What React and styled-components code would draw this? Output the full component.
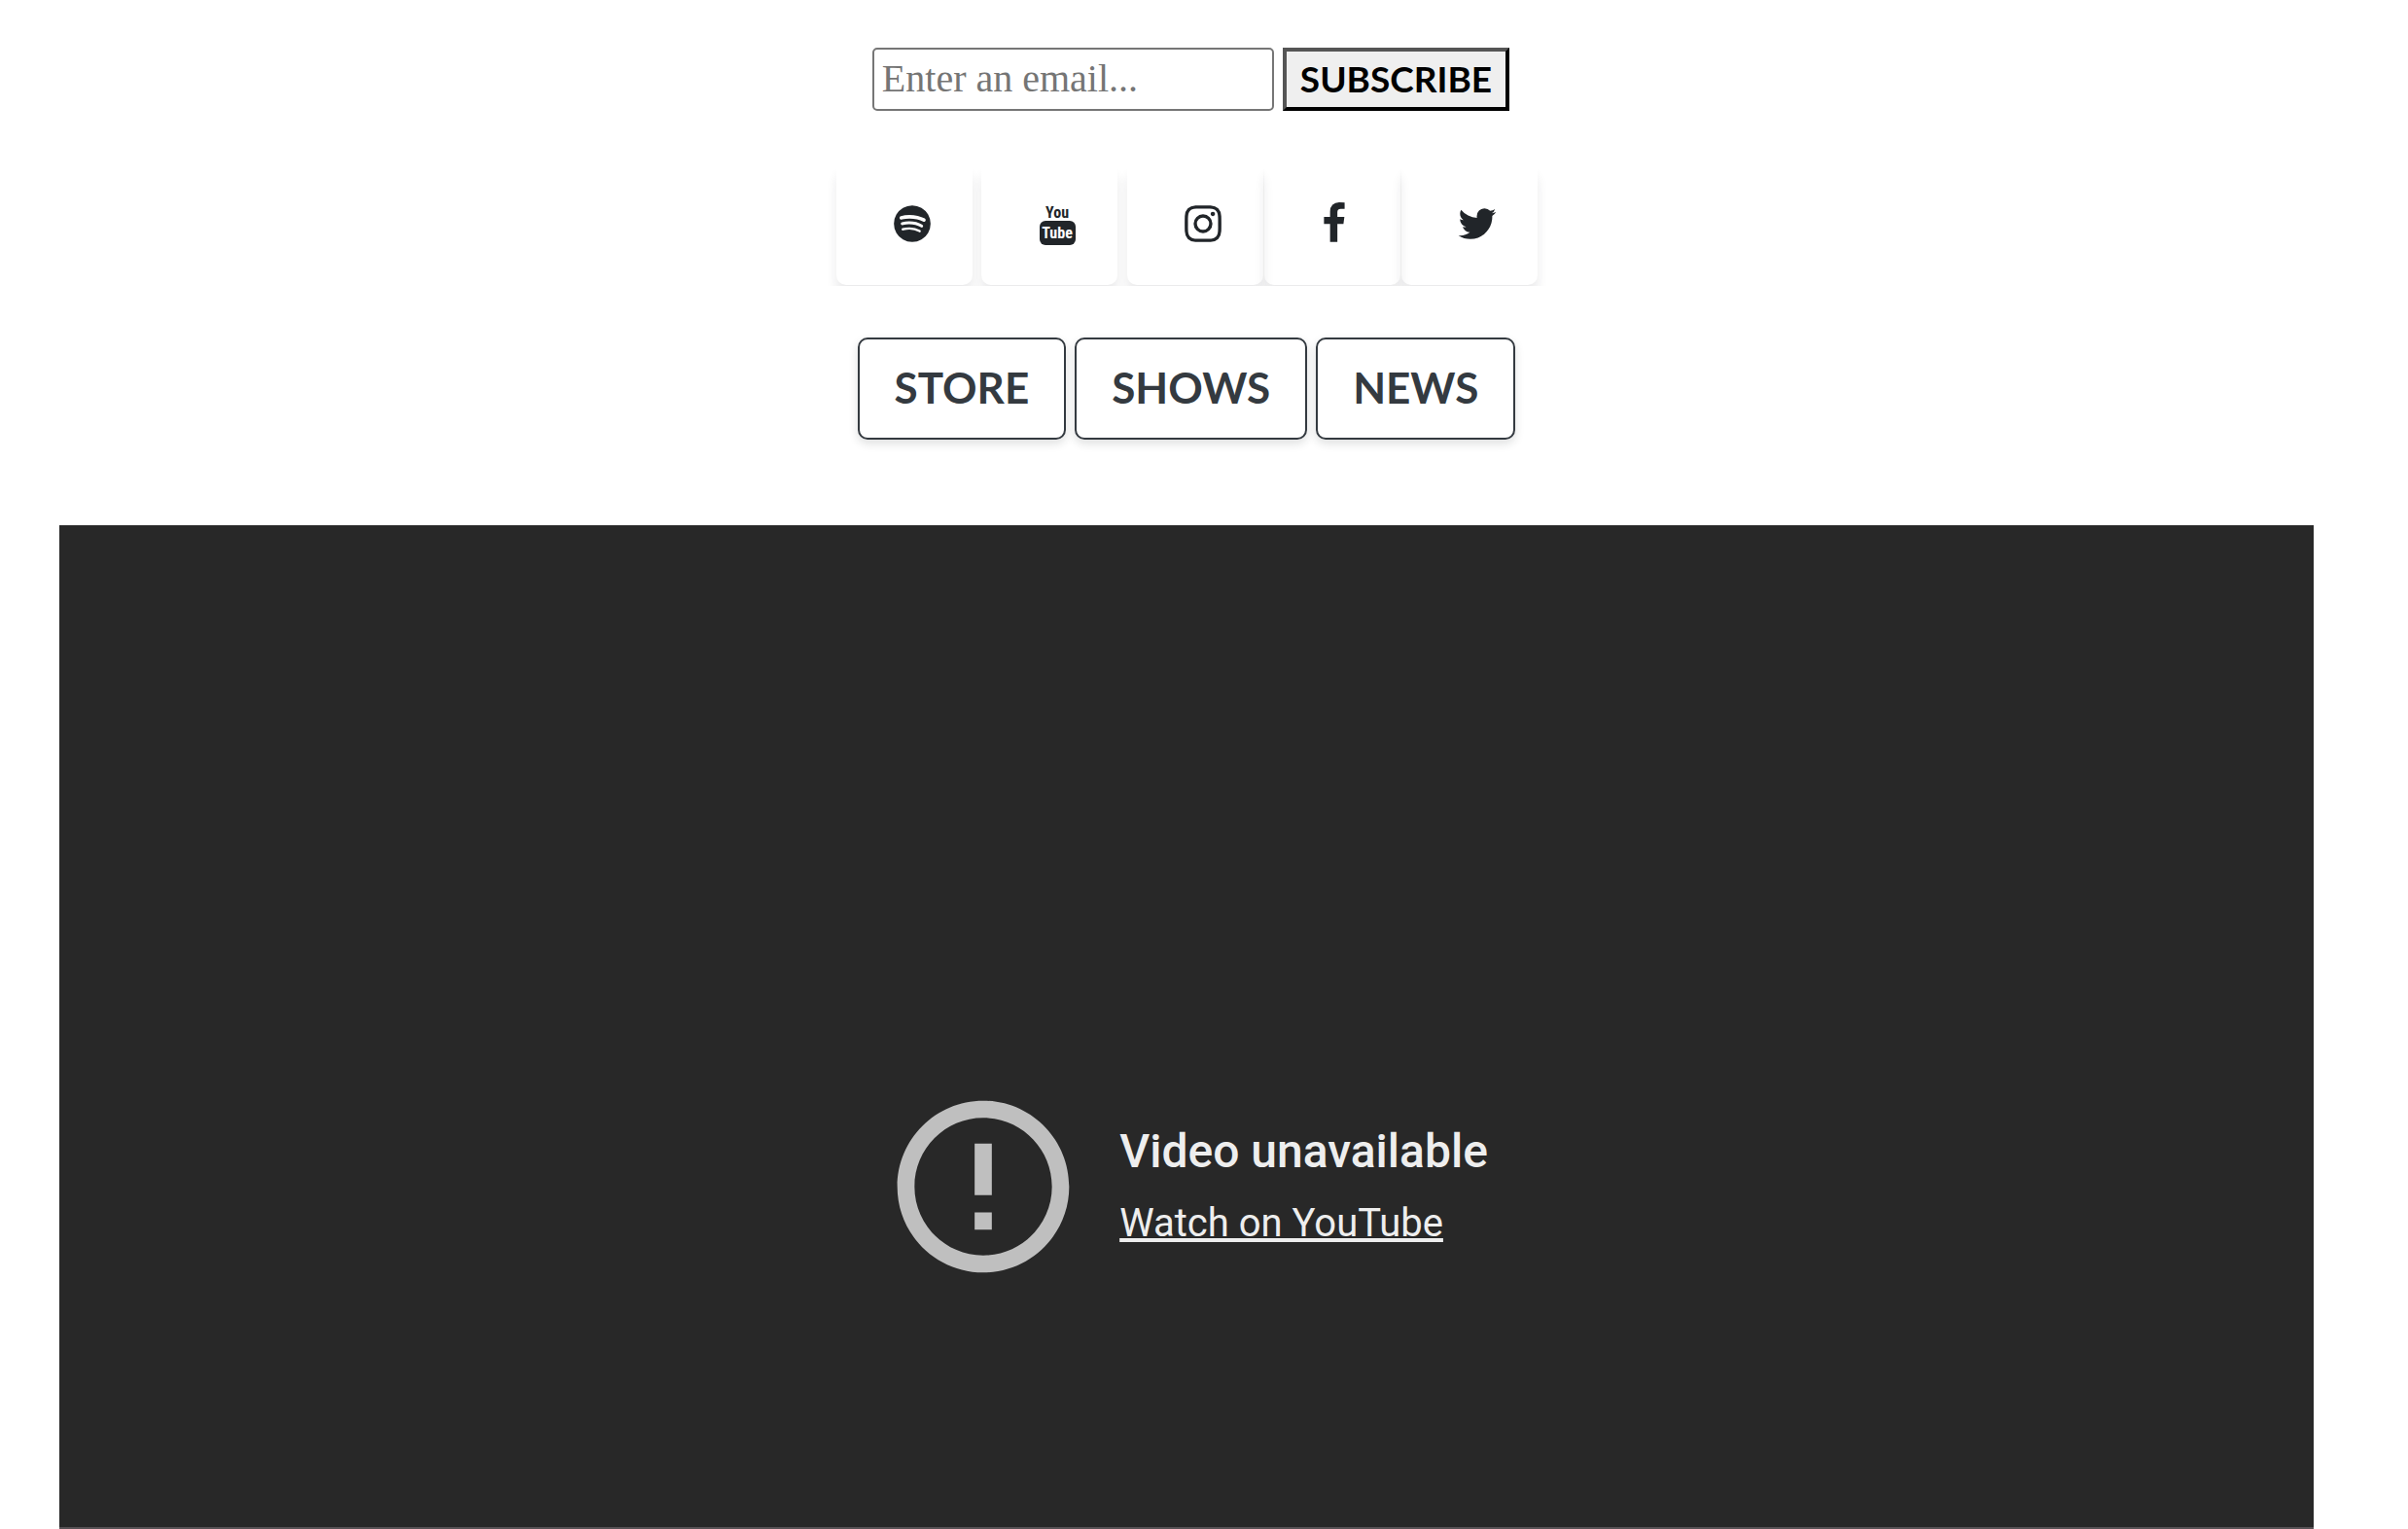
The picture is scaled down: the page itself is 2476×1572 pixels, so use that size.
import React from "react";
import styled, { createGlobalStyle } from "styled-components";

const GlobalStyle = createGlobalStyle`
  *, *::before, *::after { box-sizing: border-box; }
  body {
    margin: 0;
    background: #fff;
    color: #212529;
    font-family: Lato, "Open Sans", sans-serif;
  }
`;

const Page = styled.main`
  display: flex;
  flex-direction: column;
  align-items: center;
  min-height: 100vh;
  padding: 49px 36px 0 0;
`;

const SubscribeForm = styled.form`
  display: flex;
  gap: 9px;
  height: 65px;
  padding-left: 9px;
`;

const EmailInput = styled.input`
  width: 413px;
  margin: 0;
  padding: 0 8px 2px;
  border: 2px solid #767676;
  border-radius: 5px;
  background: #fff;
  color: #212529;
  font: 400 40px "Liberation Serif", serif;
  &::placeholder { color: #757575; opacity: 1; }
`;

const SubscribeButton = styled.button`
  margin: 0;
  padding: 0 14px 2px;
  border: 4px solid;
  border-color: #555 #000 #000 #555;
  border-radius: 0;
  background: #efefef;
  color: #000;
  font: 700 37px/52px Lato, sans-serif;
  text-transform: uppercase;
`;

const SocialRow = styled.nav`
  display: flex;
  margin-top: 53px;
  padding: 0 9px 1px;
  overflow: hidden;
`;

const SocialLink = styled.a`
  display: flex;
  align-items: center;
  justify-content: center;
  width: 140px;
  height: 126px;
  margin-right: ${(p) => p.$gap}px;
  padding-left: 16px;
  border-radius: 10px;
  box-shadow: 0 12px 12px rgba(33, 37, 41, 0.09);
  color: inherit;
  svg { display: block; fill: currentColor; }
`;

const WordmarkText = styled.text`
  font: 700 16px "Liberation Sans Narrow", "Roboto Condensed", Roboto, sans-serif;
  text-anchor: middle;
  fill: ${(p) => p.$color};
`;

const LinkRow = styled.nav`
  display: flex;
  gap: 9px;
  margin-top: 53px;
`;

const PageLink = styled.a`
  padding: 23px 36px 25px;
  border: 2px solid #343a40;
  border-radius: 10px;
  box-shadow: 0 4px 10px rgba(33, 37, 41, 0.15);
  color: #343a40;
  font-size: 44px;
  font-weight: 700;
  line-height: 53px;
  text-decoration: none;
  text-transform: uppercase;
`;

const Player = styled.section`
  display: flex;
  flex: 1;
  align-items: center;
  justify-content: center;
  gap: 34px;
  width: 95%;
  margin-top: 88px;
  padding: 330px 5px 0 0;
  border-bottom: 2px solid #575255;
  background: #282828;
  color: #eee;
  font-family: Roboto, sans-serif;
`;

const ErrorIcon = styled.svg`
  width: 212px;
  height: 212px;
  fill: #bfbfbf;
`;

const Message = styled.div`
  display: flex;
  flex-direction: column;
  align-items: flex-start;
  gap: 20px;
  padding-bottom: 4px;
`;

const MessageTitle = styled.h2`
  margin: 0;
  font-size: 48px;
  font-weight: 500;
  line-height: 60px;
`;

const WatchLink = styled.a`
  color: inherit;
  font-size: 40px;
  line-height: 48px;
  text-decoration: underline;
`;

function YouTubeMark() {
  return (
    <svg width="44" height="44" viewBox="0 0 44 44" aria-hidden="true">
      <WordmarkText x="22" y="16" $color="#212529">You</WordmarkText>
      <rect x="4" y="19" width="37" height="25" rx="6" />
      <WordmarkText x="22" y="37" $color="#fff">Tube</WordmarkText>
    </svg>
  );
}

const socials = [
  {
    name: "Spotify",
    gap: 9,
    path: "M1255 1210q0-32-30-51-193-115-447-115-133 0-287 34-42 9-42 52 0 20 13.5 34.5t35.5 14.5q5 0 37-8 132-27 243-27 226 0 397 103 19 11 33 11 19 0 33-13.5t14-34.5zm96-215q0-40-35-61-237-141-548-141-153 0-303 42-48 13-48 64 0 25 17.5 42.5t42.5 17.5q7 0 37-8 122-33 251-33 279 0 488 124 24 13 38 13 25 0 42.5-17.5t17.5-42.5zm108-248q0-47-40-70-126-73-293-110.5t-343-37.5q-204 0-364 47-23 7-38.5 25.5t-15.5 48.5q0 31 20.5 52t51.5 21q11 0 40-8 133-37 307-37 159 0 309.5 34t253.5 95q21 12 40 12 29 0 50.5-20.5t21.5-51.5zm205 149q0 209-103 385.5t-279.5 279.5-385.5 103-385.5-103-279.5-279.5-103-385.5 103-385.5 279.5-279.5 385.5-103 385.5 103 279.5 279.5 103 385.5z",
  },
  { name: "YouTube", gap: 10, Icon: YouTubeMark },
  {
    name: "Instagram",
    gap: 1,
    path: "M1152 896q0-106-75-181t-181-75-181 75-75 181 75 181 181 75 181-75 75-181zm138 0q0 164-115 279t-279 115-279-115-115-279 115-279 279-115 279 115 115 279zm108-410q0 38-27 65t-65 27-65-27-27-65 27-65 65-27 65 27 27 65zm-502-220q-7 0-76.5-.5t-105.5 0-96.5 3-103 10-71.5 18.5q-50 20-88 58t-58 88q-11 29-18.5 71.5t-10 103-3 96.5 0 105.5.5 76.5-.5 76.5 0 105.5 3 96.5 10 103 18.5 71.5q20 50 58 88t88 58q29 11 71.5 18.5t103 10 96.5 3 105.5 0 76.5-.5 76.5.5 105.5 0 96.5-3 103-10 71.5-18.5q50-20 88-58t58-88q11-29 18.5-71.5t10-103 3-96.5 0-105.5-.5-76.5.5-76.5 0-105.5-3-96.5-10-103-18.5-71.5q-20-50-58-88t-88-58q-29-11-71.5-18.5t-103-10-96.5-3-105.5 0-76.5.5zm768 630q0 229-5 317-10 208-124 322t-322 124q-88 5-317 5t-317-5q-208-10-322-124t-124-322q-5-88-5-317t5-317q10-208 124-322t322-124q88-5 317-5t317 5q208 10 322 124t124 322q5 88 5 317z",
  },
  {
    name: "Facebook",
    gap: 1,
    viewBox: "260 0 1792 1792",
    path: "M1343 12v264h-157q-86 0-116 36t-30 108v189h293l-39 296h-254v759h-306v-759h-255v-296h255v-218q0-186 104-288.5t277-102.5q147 0 228 12z",
  },
  {
    name: "Twitter",
    gap: 0,
    path: "M1684 408q-67 98-162 167 1 14 1 42 0 130-38 259.5t-115.500 248.500-184.500 210.500-258 146-323 54.500q-271 0-496-145 35 4 78 4 225 0 401-138-105-2-188-64.500t-114-159.500q33 5 61 5 43 0 85-11-112-23-185.500-111.500t-73.500-205.500v-4q68 38 146 41-66-44-105-115t-39-154q0-88 44-163 121 149 294.500 238.500t371.500 99.500q-8-38-8-74 0-134 94.500-228.500t228.500-94.500q140 0 236 102 109-21 205-78-37 115-142 178 93-10 186-50z",
  },
];

const pages = ["Store", "Shows", "News"];

export default function App() {
  return (
    <>
      <GlobalStyle />
      <Page>
        <SubscribeForm onSubmit={(e) => e.preventDefault()}>
          <EmailInput type="email" aria-label="Email" placeholder="Enter an email..." />
          <SubscribeButton type="submit">Subscribe</SubscribeButton>
        </SubscribeForm>

        <SocialRow aria-label="Social media">
          {socials.map(({ name, gap, path, viewBox = "0 0 1792 1792", Icon }) => (
            <SocialLink key={name} href={`#${name.toLowerCase()}`} aria-label={name} $gap={gap}>
              {Icon ? (
                <Icon />
              ) : (
                <svg width="44" height="44" viewBox={viewBox} aria-hidden="true">
                  <path d={path} />
                </svg>
              )}
            </SocialLink>
          ))}
        </SocialRow>

        <LinkRow aria-label="Pages">
          {pages.map((label) => (
            <PageLink key={label} href={`#${label.toLowerCase()}`}>{label}</PageLink>
          ))}
        </LinkRow>

        <Player aria-label="Video player">
          <ErrorIcon viewBox="0 0 24 24" aria-hidden="true">
            <path d="M11 15h2v2h-2zm0-8h2v6h-2zm.99-5C6.47 2 2 6.48 2 12s4.47 10 9.99 10C17.52 22 22 17.52 22 12S17.52 2 11.99 2zM12 20c-4.420 0-8-3.580-8-8s3.580-8 8-8 8 3.580 8 8-3.580 8-8 8z" />
          </ErrorIcon>
          <Message>
            <MessageTitle>Video unavailable</MessageTitle>
            <WatchLink href="#watch">Watch on YouTube</WatchLink>
          </Message>
        </Player>
      </Page>
    </>
  );
}
